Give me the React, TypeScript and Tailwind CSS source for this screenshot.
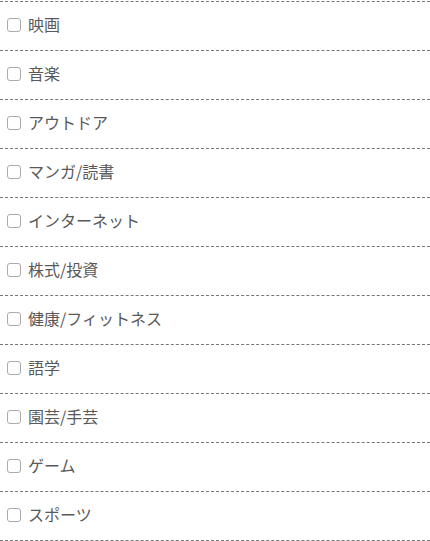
import React from 'react';

const hobbies = [
  '映画',
  '音楽',
  'アウトドア',
  'マンガ/読書',
  'インターネット',
  '株式/投資',
  '健康/フィットネス',
  '語学',
  '園芸/手芸',
  'ゲーム',
  'スポーツ',
];

const App: React.FC = () => {
  return (
    <div className="w-[430px] bg-white pt-px" style={{ fontFamily: '"Noto Sans CJK JP", "Noto Sans", sans-serif' }}>
      <ul className="border-t border-dashed border-[#777]">
        {hobbies.map((name) => (
          <li key={name} className="h-[49px] border-b border-dashed border-[#777]">
            <label className="flex h-full items-center pb-[2px] pl-[7px]">
              <input
                type="checkbox"
                className="h-[14px] w-[14px] shrink-0 appearance-none rounded-[3px] border border-[#ababab] bg-white checked:bg-[#0075ff]"
              />
              <span className="mb-[2px] ml-[7px] text-[16px] leading-[20px] text-[#595959]">{name}</span>
            </label>
          </li>
        ))}
      </ul>
    </div>
  );
};

export default App;
